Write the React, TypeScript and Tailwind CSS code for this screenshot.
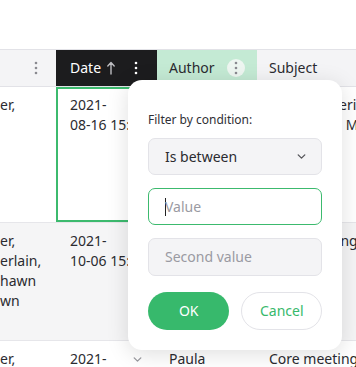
import React from "react";

const Dots = ({ color, className = "" }: { color: string; className?: string }) => (
  <svg width="4" height="14" viewBox="0 0 4 14" className={className}>
    <circle cx="2" cy="2" r="1.3" fill={color} />
    <circle cx="2" cy="7" r="1.3" fill={color} />
    <circle cx="2" cy="12" r="1.3" fill={color} />
  </svg>
);

const Chevron = ({ color, size = 10 }: { color: string; size?: number }) => (
  <svg width={size} height={size} viewBox="0 0 10 10" fill="none">
    <path d="M2 3.5 L5 6.5 L8 3.5" stroke={color} strokeWidth="1.2" strokeLinecap="round" strokeLinejoin="round" />
  </svg>
);

export default function App() {
  return (
    <div className="relative w-[356px] h-[367px] overflow-hidden bg-white text-[14px] leading-[20px] text-[#2b2b30] font-['Noto_Sans','Open_Sans',sans-serif]">
      <div className="h-[49px]" />
      {/* header */}
      <div className="flex h-[38px] border-y border-[#e2e2e7] bg-[#f4f4f6]">
        <div className="w-[56px] flex items-center justify-end pr-[18px]">
          <Dots color="#8a8a90" />
        </div>
        <div className="w-[101px] flex items-center bg-[#1c1c1e] pl-[14px] pr-[19px] text-white">
          <span>Date</span>
          <svg width="10" height="14" viewBox="0 0 10 14" className="ml-[5px]">
            <path d="M5 13 V2 M1.8 5 L5 1.6 L8.2 5" stroke="#bdbdc1" strokeWidth="1.4" fill="none" strokeLinecap="round" strokeLinejoin="round" />
          </svg>
          <div className="flex-1" />
          <Dots color="#ffffff" />
        </div>
        <div className="w-[100px] flex items-center bg-[#c4ead4] pl-[12px] pr-[12px]">
          <span>Author</span>
          <div className="flex-1" />
          <div className="w-[18px] h-[18px] rounded-full bg-[#eef6f1] flex items-center justify-center">
            <Dots color="#8a8a90" />
          </div>
        </div>
        <div className="flex-1 flex items-center pl-[12px]">Subject</div>
      </div>
      {/* row 1 */}
      <div className="flex h-[136px] border-b border-[#e6e6ea] bg-white">
        <div className="w-[56px] pt-[8px] overflow-hidden whitespace-nowrap">er,</div>
        <div className="relative w-[101px] pt-[8px] pl-[14px] overflow-hidden whitespace-nowrap">
          <div>2021-</div>
          <div>08-16 15:30</div>
          <div className="absolute inset-0 border-2 border-[#3cba6e] border-r-0" />
        </div>
        <div className="w-[100px] pt-[8px] pl-[12px] whitespace-nowrap">Peter</div>
        <div className="flex-1 pt-[8px] pl-[12px] whitespace-nowrap overflow-hidden">
          <div>Weekly steering</div>
          <div>Committee Meeting</div>
        </div>
      </div>
      {/* row 2 */}
      <div className="flex h-[118px] border-b border-[#e6e6ea] bg-[#f5f5f6]">
        <div className="w-[56px] pt-[8px] overflow-hidden whitespace-nowrap">
          <div>er,</div>
          <div>erlain,</div>
          <div>hawn</div>
          <div>wn</div>
        </div>
        <div className="w-[101px] pt-[8px] pl-[14px] overflow-hidden whitespace-nowrap">
          <div>2021-</div>
          <div>10-06 15:00</div>
        </div>
        <div className="w-[100px] pt-[8px] pl-[12px] whitespace-nowrap">Anna</div>
        <div className="flex-1 pt-[8px] pl-[12px] whitespace-nowrap overflow-hidden">
          <div>Staff meeting</div>
        </div>
      </div>
      {/* row 3 */}
      <div className="flex h-[40px] bg-white">
        <div className="w-[56px] pt-[8px] overflow-hidden whitespace-nowrap">er,</div>
        <div className="w-[101px] pt-[8px] pl-[14px] pr-[14px] flex items-start whitespace-nowrap">
          <span>2021-</span>
          <div className="flex-1" />
          <div className="mt-[5px]">
            <Chevron color="#9a9aa0" size={11} />
          </div>
        </div>
        <div className="w-[100px] pt-[8px] pl-[12px] whitespace-nowrap">Paula</div>
        <div className="flex-1 pt-[8px] pl-[12px] whitespace-nowrap overflow-hidden">Core meeting</div>
      </div>

      {/* filter popup */}
      <div className="absolute left-[128px] top-[80px] w-[214px] h-[270px] rounded-[14px] bg-white shadow-[0_4px_22px_rgba(0,0,0,0.13)] px-[20px] pt-[32px]">
        <div className="text-[12px] leading-[16px] text-[#303035]">Filter by condition:</div>
        <div className="mt-[10px] h-[37px] rounded-[7px] border border-[#e3e3e8] bg-[#f4f4f6] flex items-center pl-[16px] pr-[14px]">
          <span className="text-[#2b2b30]">Is between</span>
          <div className="flex-1" />
          <Chevron color="#55555a" size={11} />
        </div>
        <div className="mt-[13px] h-[37px] rounded-[7px] border border-[#3cba6e] bg-white flex items-center pl-[16px]">
          <div className="w-px h-[18px] bg-[#222]" />
          <span className="text-[#9a9aa2] -ml-px">Value</span>
        </div>
        <div className="mt-[13px] h-[38px] rounded-[7px] border border-[#e3e3e8] bg-[#f4f4f6] flex items-center pl-[16px]">
          <span className="text-[#9a9aa2]">Second value</span>
        </div>
        <div className="mt-[16px] flex gap-[12px]">
          <div className="w-[82px] h-[38px] rounded-full bg-[#37b96c] text-white flex items-center justify-center">OK</div>
          <div className="w-[81px] h-[38px] rounded-full border border-[#e3e3e8] bg-white text-[#37b96c] flex items-center justify-center">Cancel</div>
        </div>
      </div>
    </div>
  );
}
